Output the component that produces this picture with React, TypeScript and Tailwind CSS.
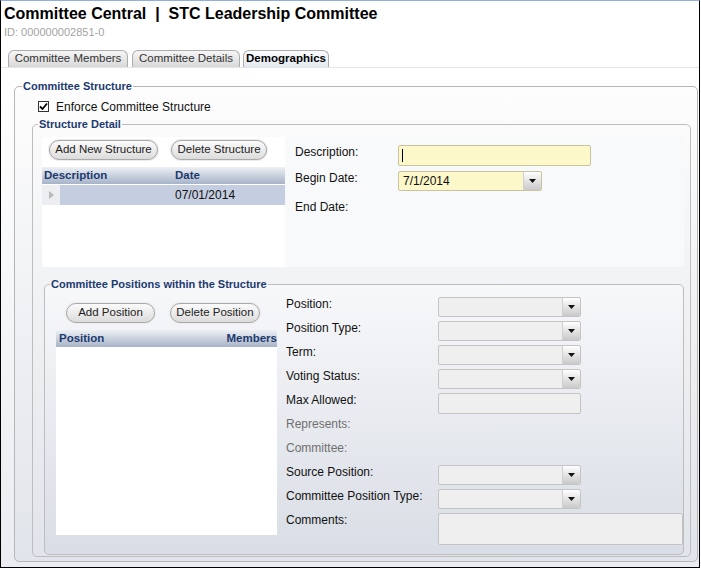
import type { ReactNode } from 'react'

function PillButton({ children, w }: { children: ReactNode; w: string }) {
  return (
    <div className={`${w} h-[22px] rounded-full bg-[#ececec] p-[1px]`}>
      <div className="h-full rounded-full border border-[#a9a9a9] bg-gradient-to-b from-[#fbfbfb] to-[#dcdcdc] flex items-center justify-center text-[11.5px] text-[#222]">
        {children}
      </div>
    </div>
  )
}

function DropArrow() {
  return (
    <div className="w-[18px] h-full border-l border-[#d0d0d0] bg-gradient-to-b from-white to-[#c9c9c9] flex items-center justify-center rounded-r-[2px]">
      <svg width="7" height="4" viewBox="0 0 7 4">
        <path d="M0 0h7L3.5 4z" fill="#111" />
      </svg>
    </div>
  )
}

function SelectBox() {
  return (
    <div className="w-[143px] h-[20px] border border-[#c4c4c4] rounded-[2px] bg-[#efefef] flex justify-end">
      <DropArrow />
    </div>
  )
}

function FormRow({ label, children, muted }: { label: string; children?: ReactNode; muted?: boolean }) {
  return (
    <div className="flex h-[20px] mb-[4px]">
      <div className={`w-[152px] leading-[14px] text-[12px] ${muted ? 'text-[#6f6f6f]' : 'text-[#111]'}`}>{label}</div>
      {children}
    </div>
  )
}

function GridHeader({ children }: { children: ReactNode }) {
  return (
    <div className="h-[17px] bg-gradient-to-b from-[#eef1f5] to-[#a7b3c8] flex items-center text-[11.5px] font-bold text-[#1d3a6e]">
      {children}
    </div>
  )
}

export default function App() {
  return (
    <div className="w-[700px] h-[568px] border border-black border-t-[#8fb0d9] flex flex-col overflow-hidden bg-white font-['Liberation_Sans',Arial,sans-serif]">
      <div className="px-[3px] pt-[4px]">
        <div className="h-[18px] leading-[18px] text-[16px] font-bold text-black whitespace-pre">
          Committee Central  |  STC Leadership Committee
        </div>
        <div className="mt-[2px] h-[14px] leading-[14px] text-[11px] text-[#a3a3a3]">ID: 000000002851-0</div>
      </div>

      <div className="mt-[11px] flex pl-[7px] gap-[4px] h-[18px] border-b border-[#e6e6e6]">
        <div className="w-[120px] rounded-t-[6px] border border-b-0 border-[#acacac] bg-gradient-to-b from-[#f6f6f6] to-[#d8d8d8] flex items-center justify-center text-[11.5px] text-[#333]">
          Committee Members
        </div>
        <div className="w-[108px] rounded-t-[6px] border border-b-0 border-[#acacac] bg-gradient-to-b from-[#f6f6f6] to-[#d8d8d8] flex items-center justify-center text-[11.5px] text-[#333]">
          Committee Details
        </div>
        <div className="w-[86px] -ml-[1px] rounded-t-[6px] border border-b-0 border-[#acacac] bg-gradient-to-b from-[#fbfcfd] to-[#e4e9f0] flex items-center justify-center text-[11.5px] font-bold text-black">
          Demographics
        </div>
      </div>

      <div className="flex-1 bg-gradient-to-b from-white to-[#eaecf1] pt-[12px] pl-[13px] pr-[1px]">
        <fieldset className="border border-[#b6b6b6] rounded-[5px] bg-gradient-to-b from-[#fdfdfd] to-[#e1e4ea] pb-[4px]">
          <legend className="ml-[7px] px-[1px] h-[13px] leading-[13px] text-[11px] font-bold text-[#1c3a70]">
            Committee Structure
          </legend>
          <div className="mt-[7px] pl-[23px] flex items-center h-[13px]">
            <div className="w-[11px] h-[11px] border border-[#333] bg-white flex items-center justify-center">
              <svg width="9" height="9" viewBox="0 0 9 9">
                <path d="M1 4.5 3.5 7 8 1.5" fill="none" stroke="#000" strokeWidth="1.8" />
              </svg>
            </div>
            <span className="ml-[7px] text-[12px] text-[#111]">Enforce Committee Structure</span>
          </div>

          <fieldset className="mt-[5px] ml-[17px] mr-[6px] border border-[#bdbdbd] rounded-[5px] pb-[1px]">
            <legend className="ml-[5px] px-[1px] h-[13px] leading-[13px] text-[11px] font-bold text-[#1c3a70]">
              Structure Detail
            </legend>

            <div className="mt-[6px] ml-[9px] mr-[6px] flex h-[130px]">
              <div className="w-[243px] bg-white">
                <div className="pt-[2px] pl-[6px] flex gap-[11px]">
                  <PillButton w="w-[111px]">Add New Structure</PillButton>
                  <PillButton w="w-[98px]">Delete Structure</PillButton>
                </div>
                <div className="mt-[6px]">
                  <GridHeader>
                    <span className="pl-[2px] w-[133px]">Description</span>
                    <span>Date</span>
                  </GridHeader>
                  <div className="mt-[1px] flex h-[20px]">
                    <div className="w-[18px] bg-[#eceef2] flex items-center justify-center">
                      <svg width="5" height="8" viewBox="0 0 5 8">
                        <path d="M0 0 5 4 0 8z" fill="#b9b9b9" />
                      </svg>
                    </div>
                    <div className="flex-1 bg-[#c5cde0] flex items-center text-[12px] text-[#111]">
                      <span className="pl-[115px]">07/01/2014</span>
                    </div>
                  </div>
                </div>
              </div>

              <div className="flex-1 bg-[#f8f9fa] pt-[8px] pl-[10px]">
                <div className="flex h-[21px]">
                  <div className="w-[103px] text-[12px] text-[#111] leading-[14px]">Description:</div>
                  <div className="w-[193px] h-[21px] border border-[#cbc39f] rounded-[2px] bg-[#fdf8c9] flex items-center pl-[3px]">
                    <div className="w-[1px] h-[13px] bg-black" />
                  </div>
                </div>
                <div className="mt-[5px] flex h-[20px]">
                  <div className="w-[103px] text-[12px] text-[#111] leading-[14px]">Begin Date:</div>
                  <div className="w-[144px] h-[20px] border border-[#cbc39f] rounded-[2px] bg-[#fdf8c9] flex items-center">
                    <span className="flex-1 pl-[4px] text-[12px] text-[#111]">7/1/2014</span>
                    <DropArrow />
                  </div>
                </div>
                <div className="mt-[9px] text-[12px] text-[#111] leading-[14px]">End Date:</div>
              </div>
            </div>

            <fieldset className="mt-[11px] ml-[11px] mr-[6px] border border-[#bdbdbd] rounded-[5px] bg-gradient-to-b from-[#f7f8fa] to-[#d9dde5]">
              <legend className="ml-[5px] px-[1px] h-[13px] leading-[13px] text-[11px] font-bold text-[#1c3a70]">
                Committee Positions within the Structure
              </legend>
              <div className="flex">
                <div className="ml-[11px] w-[221px] pt-[11px]">
                  <div className="flex gap-[13px] pl-[9px]">
                    <PillButton w="w-[91px]">Add Position</PillButton>
                    <PillButton w="w-[92px]">Delete Position</PillButton>
                  </div>
                  <div className="mt-[6px]">
                    <GridHeader>
                      <span className="pl-[3px] flex-1">Position</span>
                      <span>Members</span>
                    </GridHeader>
                    <div className="h-[188px] bg-white" />
                  </div>
                </div>

                <div className="ml-[9px] flex-1 pt-[6px] pb-[9px]">
                  <FormRow label="Position:"><SelectBox /></FormRow>
                  <FormRow label="Position Type:"><SelectBox /></FormRow>
                  <FormRow label="Term:"><SelectBox /></FormRow>
                  <FormRow label="Voting Status:"><SelectBox /></FormRow>
                  <FormRow label="Max Allowed:">
                    <div className="w-[143px] h-[21px] border border-[#c4c4c4] rounded-[2px] bg-[#efefef]" />
                  </FormRow>
                  <FormRow label="Represents:" muted />
                  <FormRow label="Committee:" muted />
                  <FormRow label="Source Position:"><SelectBox /></FormRow>
                  <FormRow label="Committee Position Type:"><SelectBox /></FormRow>
                  <div className="flex">
                    <div className="w-[152px] leading-[14px] text-[12px] text-[#111]">Comments:</div>
                    <div className="flex-1 h-[32px] border border-[#c4c4c4] rounded-[2px] bg-[#efefef]" />
                  </div>
                </div>
              </div>
            </fieldset>
          </fieldset>
        </fieldset>
      </div>
    </div>
  )
}
